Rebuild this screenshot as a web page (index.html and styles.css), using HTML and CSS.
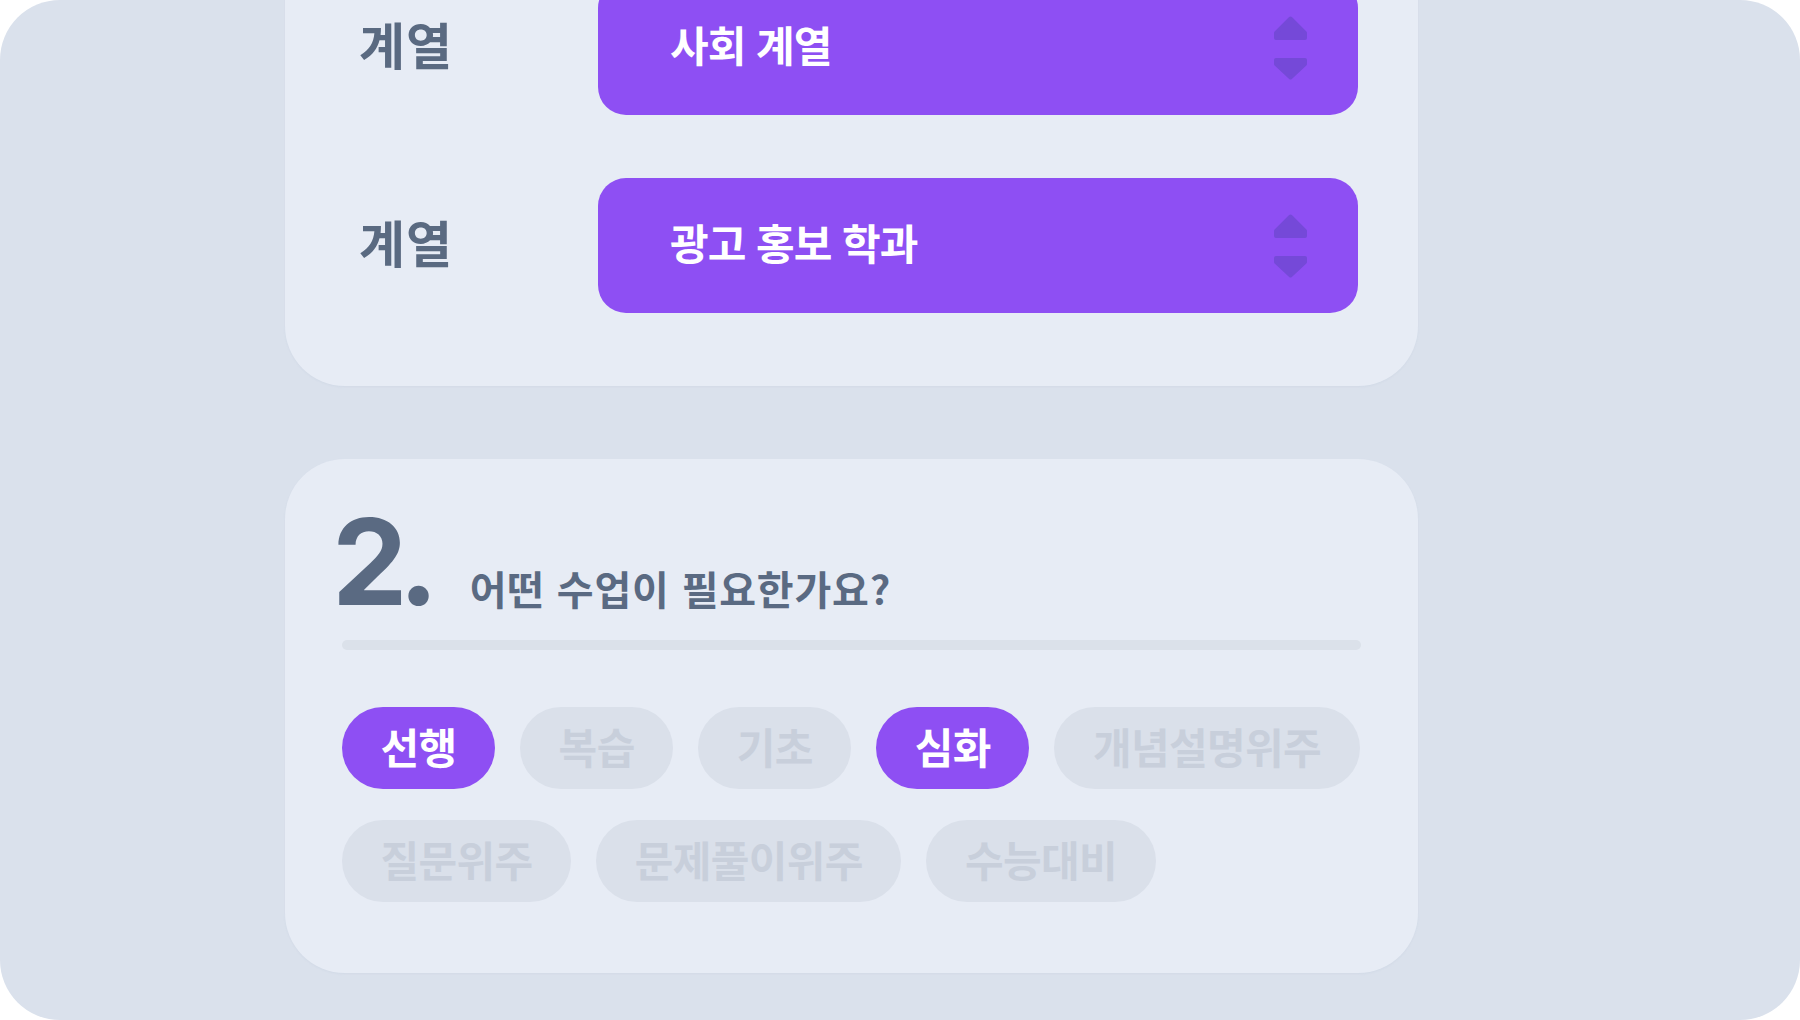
FILE: index.html
```html
<!DOCTYPE html>
<html lang="ko">
<head>
<meta charset="utf-8">
<title>수업 선택</title>
<link rel="stylesheet" href="styles.css">
</head>
<body>
<div class="frame">
  <main class="column">
    <section class="card card-fields">
      <div class="field-row">
        <span class="field-label">계열</span>
        <div class="select">
          <span class="select-value">사회 계열</span>
          <svg class="select-arrows" width="33" height="64" viewBox="0 0 33 64" aria-hidden="true">
            <polygon points="16.5,2.5 31,17 31,22 2,22 2,17"/>
            <polygon points="2,44 31,44 31,48 16.5,61.5 2,48"/>
          </svg>
        </div>
      </div>
      <div class="field-row">
        <span class="field-label">계열</span>
        <div class="select">
          <span class="select-value">광고 홍보 학과</span>
          <svg class="select-arrows" width="33" height="64" viewBox="0 0 33 64" aria-hidden="true">
            <polygon points="16.5,2.5 31,17 31,22 2,22 2,17"/>
            <polygon points="2,44 31,44 31,48 16.5,61.5 2,48"/>
          </svg>
        </div>
      </div>
    </section>

    <section class="card card-question">
      <header class="q-head">
        <span class="q-num">2.</span>
        <h2 class="q-title">어떤 수업이 필요한가요?</h2>
      </header>
      <div class="q-divider"></div>
      <div class="chips">
        <span class="chip chip-on">선행</span>
        <span class="chip">복습</span>
        <span class="chip">기초</span>
        <span class="chip chip-on">심화</span>
        <span class="chip">개념설명위주</span>
        <span class="chip">질문위주</span>
        <span class="chip">문제풀이위주</span>
        <span class="chip">수능대비</span>
      </div>
    </section>
  </main>
</div>
</body>
</html>
```

FILE: styles.css
```css
html, body {
  margin: 0;
  padding: 0;
  background: #ffffff;
}

body {
  font-family: "Noto Sans CJK KR", "Noto Sans", sans-serif;
}

.frame {
  width: 1800px;
  height: 1020px;
  border-radius: 60px;
  background: #dae1ec;
  overflow: hidden;
}

.column {
  width: 1133px;
  margin-left: 285px;
  margin-top: -93px;
  display: flex;
  flex-direction: column;
  gap: 73px;
}

.card {
  background: #e7ecf5;
  border-radius: 60px;
  box-shadow: 0 1px 2px rgba(160, 175, 200, 0.12);
}

.card-fields {
  padding: 73px 57px 73px 57px;
  display: flex;
  flex-direction: column;
  gap: 63px;
}

.field-row {
  display: grid;
  grid-template-columns: 256px 760px;
  align-items: center;
}

.field-label {
  padding-left: 17px;
  padding-bottom: 9px;
  font-size: 50px;
  font-weight: 700;
  letter-spacing: 1px;
  color: #5a6a81;
  line-height: 1;
}

.select {
  height: 135px;
  border-radius: 28px;
  background: #8e4ff3;
  display: flex;
  align-items: center;
  justify-content: space-between;
  padding: 0 51px 0 72px;
}

.select-value {
  color: #ffffff;
  font-size: 42px;
  font-weight: 700;
  letter-spacing: -1px;
  line-height: 1;
  padding-bottom: 8px;
}

.select-arrows polygon {
  fill: #7549d8;
  stroke: #7549d8;
  stroke-width: 4;
  stroke-linejoin: round;
}

.card-question {
  padding: 43px 57px 71px 57px;
}

.q-head {
  display: flex;
  align-items: baseline;
  gap: 40px;
  margin: 0;
}

.q-num {
  font-family: "Inter", "Noto Sans", sans-serif;
  font-size: 120px;
  font-weight: 700;
  line-height: 1;
  letter-spacing: -9px;
  color: #5a6a82;
  margin-left: -10px;
}

.q-title {
  margin: 0;
  font-size: 40px;
  font-weight: 700;
  letter-spacing: 0.8px;
  color: #5a6a82;
  line-height: 1;
}

.q-divider {
  height: 10px;
  border-radius: 5px;
  background: #dbe1ea;
  margin-top: 18px;
}

.chips {
  margin-top: 57px;
  display: flex;
  flex-wrap: wrap;
  column-gap: 25px;
  row-gap: 31px;
}

.chip {
  height: 82px;
  box-sizing: border-box;
  padding: 0 38.5px 4px;
  border-radius: 41px;
  display: inline-flex;
  align-items: center;
  background: #dae0ea;
  color: #c8cfdb;
  font-size: 42px;
  font-weight: 700;
  letter-spacing: -0.6px;
  line-height: 1;
}

.chip-on {
  background: #8e4ff3;
  color: #ffffff;
}
```
